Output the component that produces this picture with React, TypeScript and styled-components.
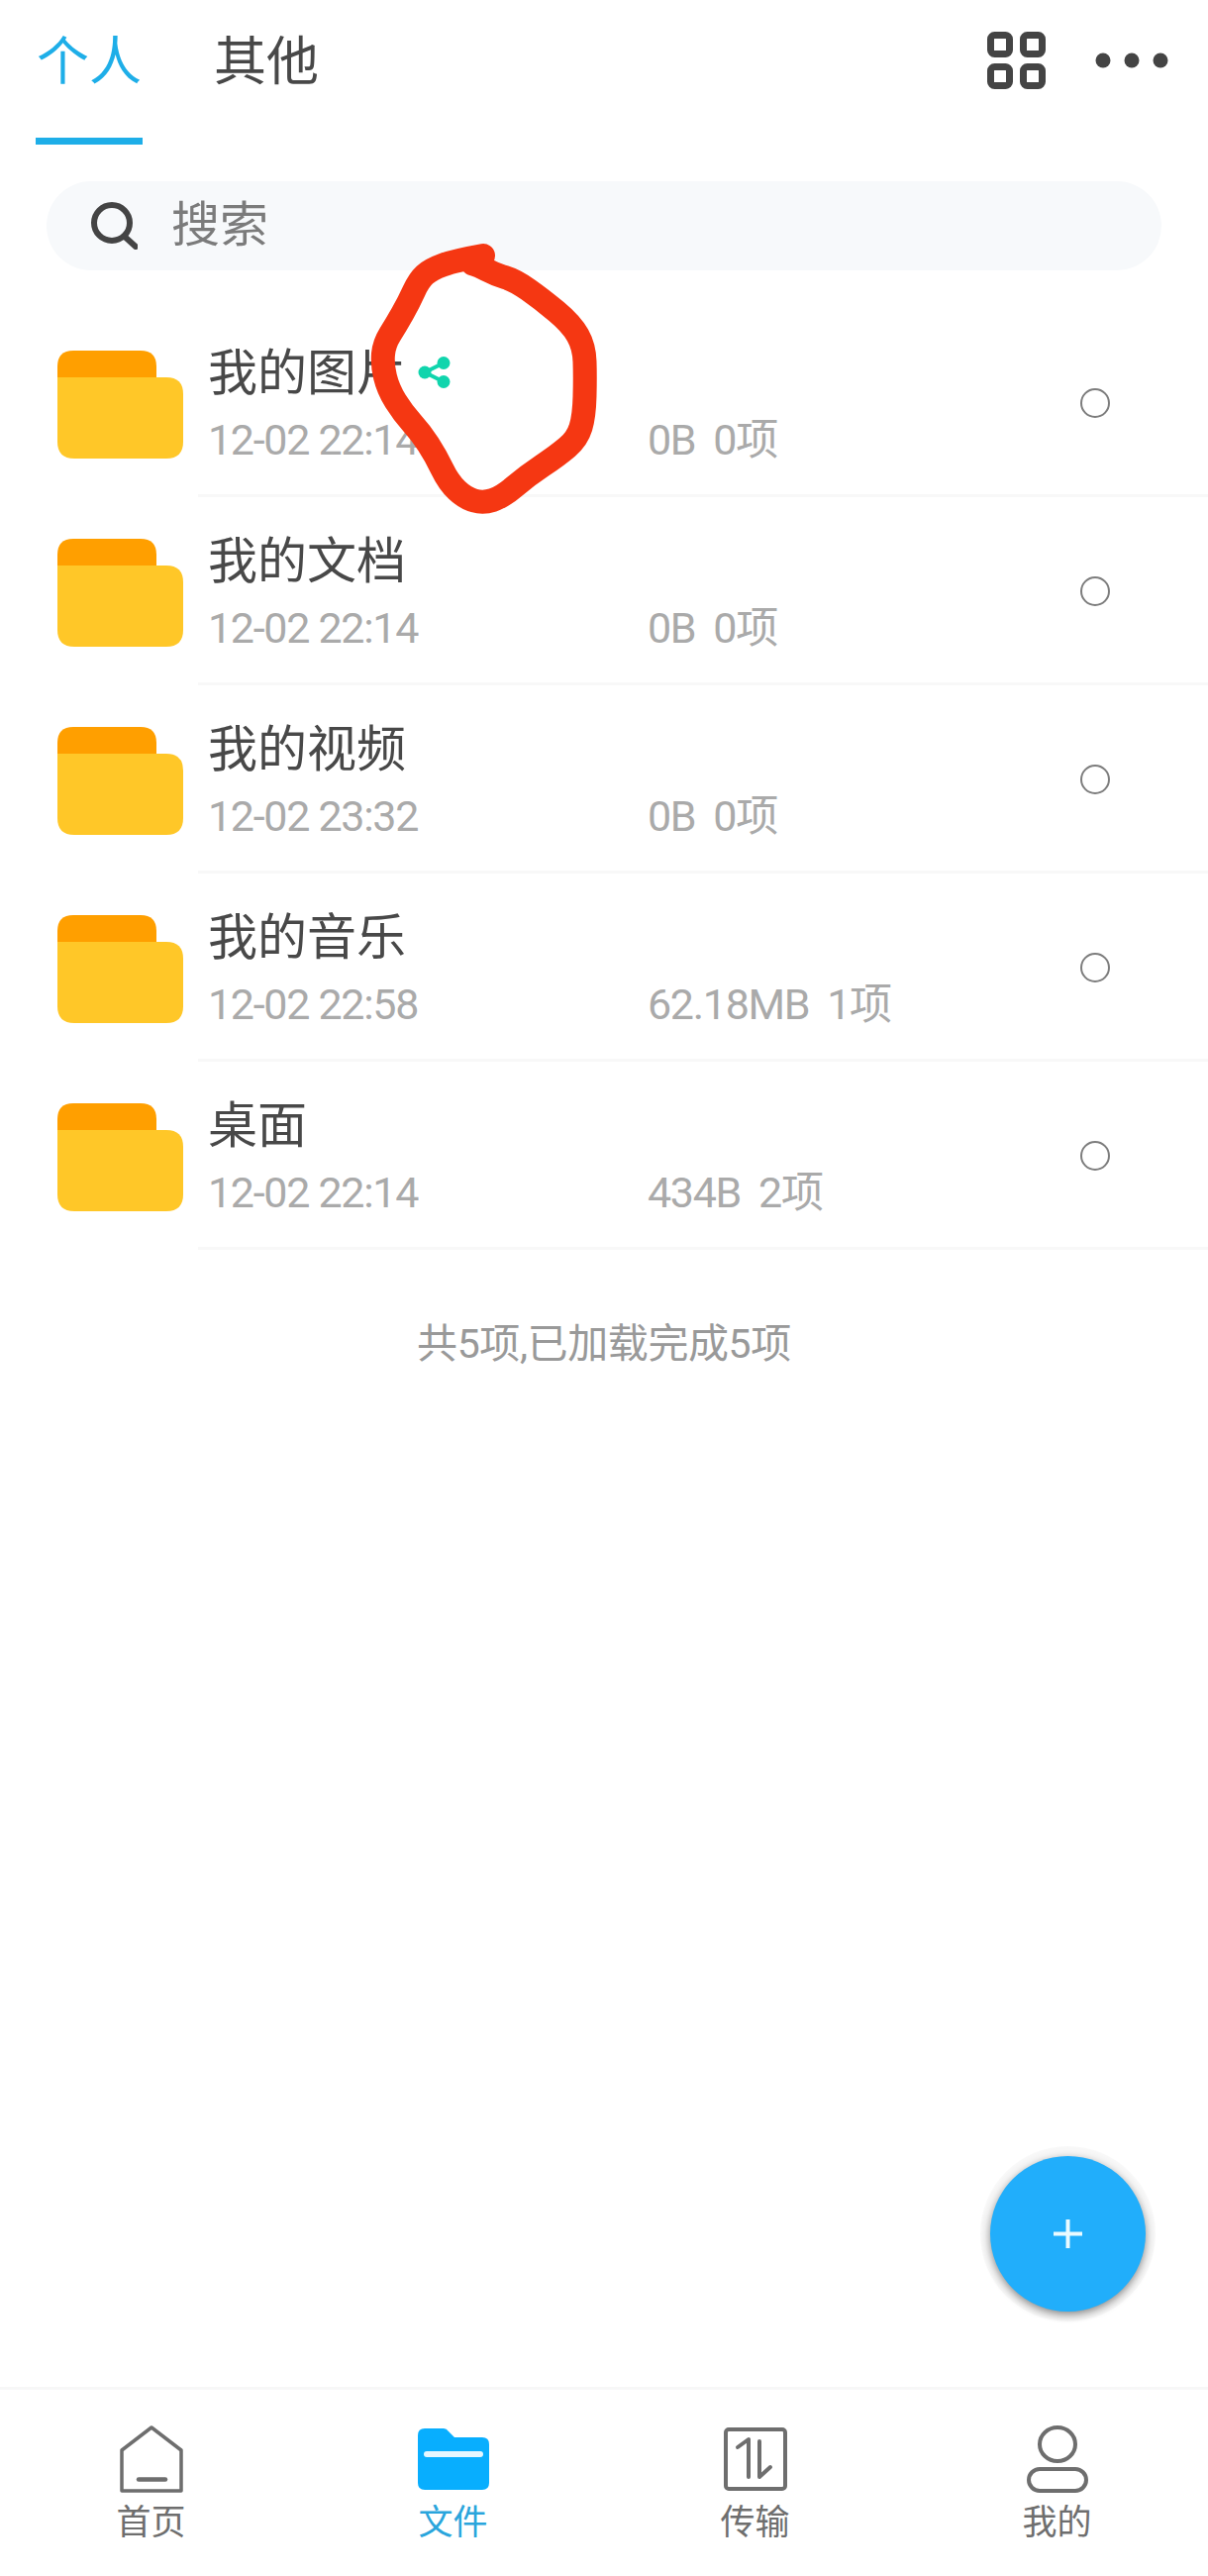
import styled, { createGlobalStyle } from "styled-components";

const GlobalStyle = createGlobalStyle`
  html, body {
    margin: 0;
    padding: 0;
    background: #fff;
  }
  * {
    box-sizing: border-box;
  }
`;

const Page = styled.div`
  position: relative;
  width: 1220px;
  height: 2601px;
  display: flex;
  flex-direction: column;
  overflow: hidden;
  background: #fff;
  font-family: Roboto, "Noto Sans CJK SC", sans-serif;
`;

const Header = styled.header`
  height: 146px;
  flex: none;
  display: flex;
  align-items: flex-start;
  padding: 0 40px 0 36px;
`;

const Tab = styled.div<{ active?: boolean }>`
  width: 108px;
  height: 146px;
  margin-right: 71px;
  padding-top: 29px;
  font-size: 53px;
  line-height: 68px;
  text-align: center;
  white-space: nowrap;
  color: ${({ active }) => (active ? "#1eaee8" : "#484848")};
  border-bottom: 7px solid ${({ active }) => (active ? "#1eaee8" : "transparent")};
`;

const HeaderIcons = styled.div`
  margin-left: auto;
  padding-top: 32px;
  display: flex;
  align-items: center;
  gap: 50px;
`;

const Search = styled.div`
  flex: none;
  margin: 37px 47px 0;
  height: 90px;
  border-radius: 45px;
  background: #f7f9fb;
  display: flex;
  align-items: center;
  gap: 34px;
  padding-left: 44px;
  font-size: 49px;
  line-height: 90px;
  color: #7b7b7b;
`;

const SearchLabel = styled.span`
  height: 90px;
`;

const List = styled.div`
  flex: none;
  margin-top: 37px;
`;

const Row = styled.div`
  height: 190px;
  display: flex;
  align-items: flex-start;
  padding: 44px 0 0 58px;
  position: relative;
  &::after {
    content: "";
    position: absolute;
    left: 200px;
    right: 0;
    bottom: -2px;
    height: 3px;
    background: #f8f8f8;
  }
`;

const RowBody = styled.div`
  margin-left: 25px;
  flex: 1;
`;

const Title = styled.div`
  display: flex;
  align-items: center;
  height: 56px;
  margin-top: -5px;
  font-size: 50px;
  line-height: 56px;
  color: #484848;
`;

const ShareIcon = styled.svg`
  margin-left: 12px;
  margin-top: -2px;
`;

const Meta = styled.div`
  display: flex;
  height: 50px;
  margin-top: 14px;
  font-size: 43px;
  line-height: 50px;
  letter-spacing: -1.3px;
  color: #aaa;
`;

const DateText = styled.div`
  width: 444px;
  flex: none;
`;

const Count = styled.span`
  margin-left: 18px;
`;

const Radio = styled.div`
  flex: none;
  width: 30px;
  height: 30px;
  margin: 38px 99px 0 0;
  border-radius: 50%;
  border: 2px solid #7d7d7d;
`;

const Summary = styled.div`
  flex: none;
  margin-top: 72px;
  text-align: center;
  font-size: 41px;
  line-height: 50px;
  letter-spacing: -0.4px;
  color: #999;
`;

const Nav = styled.nav`
  margin-top: auto;
  height: 191px;
  flex: none;
  display: grid;
  grid-template-columns: repeat(4, 305px);
  border-top: 3px solid #f7f7f7;
`;

const NavItem = styled.div<{ active?: boolean }>`
  display: flex;
  flex-direction: column;
  align-items: center;
  padding-top: 34px;
  font-size: 35px;
  line-height: 46px;
  color: ${({ active }) => (active ? "#2aa5dc" : "#6e6e6e")};
`;

const NavIconBox = styled.div`
  height: 72px;
  display: flex;
  align-items: center;
  justify-content: center;
  margin-bottom: 6px;
`;

const Fab = styled.button`
  position: absolute;
  left: 1000px;
  top: 2177px;
  width: 157px;
  height: 157px;
  padding: 0;
  border: none;
  border-radius: 50%;
  background: #21aefb;
  box-shadow: 0 3px 9px rgba(0, 0, 0, 0.45), 0 0 1px 10px rgba(0, 0, 0, 0.03);
  display: flex;
  align-items: center;
  justify-content: center;
`;

const Scribble = styled.svg`
  position: absolute;
  left: 0;
  top: 0;
  pointer-events: none;
`;

const items = [
  { name: "我的图片", date: "12-02 22:14", size: "0B", count: "0项", shared: true },
  { name: "我的文档", date: "12-02 22:14", size: "0B", count: "0项" },
  { name: "我的视频", date: "12-02 23:32", size: "0B", count: "0项" },
  { name: "我的音乐", date: "12-02 22:58", size: "62.18MB", count: "1项" },
  { name: "桌面", date: "12-02 22:14", size: "434B", count: "2项" },
];

// the hand drawn red loop, points read off the screenshot
const loop = [
  [488, 258], [460, 263], [435, 272], [423, 283], [413, 305], [400, 328], [388, 347],
  [386, 368], [392, 393], [407, 417], [425, 437], [440, 460], [453, 487], [470, 503],
  [488, 508], [507, 502], [533, 480], [563, 460], [583, 443], [590, 420], [591, 380],
  [590, 350], [577, 327], [547, 302], [520, 283], [500, 277], [483, 268], [472, 265],
];

function smoothPath(points: number[][]) {
  let d = `M${points[0][0]} ${points[0][1]}`;
  for (let i = 1; i < points.length - 1; i++) {
    const midX = (points[i][0] + points[i + 1][0]) / 2;
    const midY = (points[i][1] + points[i + 1][1]) / 2;
    d += `Q${points[i][0]} ${points[i][1]} ${midX} ${midY}`;
  }
  return d;
}

function FolderIcon() {
  return (
    <svg width="127" height="109" viewBox="0 0 127 109" style={{ flex: "none" }}>
      <path d="M0 30V16Q0 0 16 0H84Q100 0 100 16V30Z" fill="#ff9f00" />
      <path d="M0 27H110Q127 27 127 44V92Q127 109 110 109H17Q0 109 0 92Z" fill="#ffc728" />
    </svg>
  );
}

function GridIcon() {
  return (
    <svg width="59" height="58" viewBox="0 0 59 58" fill="none" stroke="#444" strokeWidth="7">
      <rect x="3.5" y="3.5" width="19" height="19" rx="4" />
      <rect x="36.5" y="3.5" width="19" height="19" rx="4" />
      <rect x="3.5" y="35.5" width="19" height="19" rx="4" />
      <rect x="36.5" y="35.5" width="19" height="19" rx="4" />
    </svg>
  );
}

function DotsIcon() {
  return (
    <svg width="74" height="16" viewBox="0 0 74 16" fill="#444">
      <circle cx="8" cy="8" r="7.5" />
      <circle cx="37" cy="8" r="7.5" />
      <circle cx="66" cy="8" r="7.5" />
    </svg>
  );
}

function SearchIcon() {
  return (
    <svg width="48" height="48" viewBox="0 0 48 48" fill="none" stroke="#444" strokeWidth="6" strokeLinecap="round">
      <circle cx="22" cy="21" r="18" />
      <path d="M35 35L46 45" />
    </svg>
  );
}

function Share() {
  return (
    <ShareIcon width="33" height="32" viewBox="0 0 33 32" fill="#10d5ad" stroke="#10d5ad">
      <circle cx="7" cy="16" r="6.5" stroke="none" />
      <circle cx="26" cy="6.5" r="6.5" stroke="none" />
      <circle cx="26" cy="25.5" r="6.5" stroke="none" />
      <path d="M7 16L26 6.5M7 16L26 25.5" strokeWidth="4" />
    </ShareIcon>
  );
}

function HomeIcon() {
  return (
    <svg width="64" height="68" viewBox="0 0 64 68" fill="none" stroke="#6e6e6e" strokeWidth="3.5" strokeLinejoin="round" strokeLinecap="round">
      <path d="M32 2L62 25V66H2V25Z" />
      <path d="M19 54.5H46" strokeWidth="4.5" />
    </svg>
  );
}

function FileIcon() {
  return (
    <svg width="72" height="62" viewBox="0 0 72 62">
      <path d="M0 7Q0 0 7 0H26Q29 0 31 3L37 9H65Q72 9 72 16V55Q72 62 65 62H7Q0 62 0 55Z" fill="#08aefe" />
      <rect x="6" y="23" width="60" height="6" rx="3" fill="#e4f6ff" />
    </svg>
  );
}

function TransferIcon() {
  return (
    <svg width="64" height="64" viewBox="0 0 64 64" fill="none" stroke="#6e6e6e" strokeWidth="4" strokeLinecap="round" strokeLinejoin="round">
      <rect x="2" y="2" width="60" height="60" rx="3" />
      <path d="M14 20L25 12V50" />
      <path d="M36 14V50L47 40" />
    </svg>
  );
}

function PersonIcon() {
  return (
    <svg width="62" height="68" viewBox="0 0 62 68" fill="none" stroke="#6e6e6e" strokeWidth="4">
      <ellipse cx="31" cy="19" rx="18" ry="17" />
      <rect x="2" y="44" width="58" height="22" rx="11" />
    </svg>
  );
}

const navItems = [
  { label: "首页", icon: <HomeIcon /> },
  { label: "文件", icon: <FileIcon />, active: true },
  { label: "传输", icon: <TransferIcon /> },
  { label: "我的", icon: <PersonIcon /> },
];

export default function App() {
  return (
    <Page>
      <GlobalStyle />
      <Header>
        <Tab active>个人</Tab>
        <Tab>其他</Tab>
        <HeaderIcons>
          <GridIcon />
          <DotsIcon />
        </HeaderIcons>
      </Header>
      <Search>
        <SearchIcon />
        <SearchLabel>搜索</SearchLabel>
      </Search>
      <List>
        {items.map((item) => (
          <Row key={item.name}>
            <FolderIcon />
            <RowBody>
              <Title>
                {item.name}
                {item.shared && <Share />}
              </Title>
              <Meta>
                <DateText>{item.date}</DateText>
                <span>{item.size}</span>
                <Count>{item.count}</Count>
              </Meta>
            </RowBody>
            <Radio />
          </Row>
        ))}
      </List>
      <Summary>共5项,已加载完成5项</Summary>
      <Nav>
        {navItems.map((item) => (
          <NavItem key={item.label} active={item.active}>
            <NavIconBox>{item.icon}</NavIconBox>
            {item.label}
          </NavItem>
        ))}
      </Nav>
      <Fab>
        <svg width="29" height="29" viewBox="0 0 29 29" stroke="#eafaff" strokeWidth="4">
          <path d="M0 14.5H29M14.5 0V29" />
        </svg>
      </Fab>
      <Scribble width="1220" height="2601" fill="none" stroke="#f53712" strokeWidth="24" strokeLinecap="round" strokeLinejoin="round">
        <path d={smoothPath(loop)} />
      </Scribble>
    </Page>
  );
}
